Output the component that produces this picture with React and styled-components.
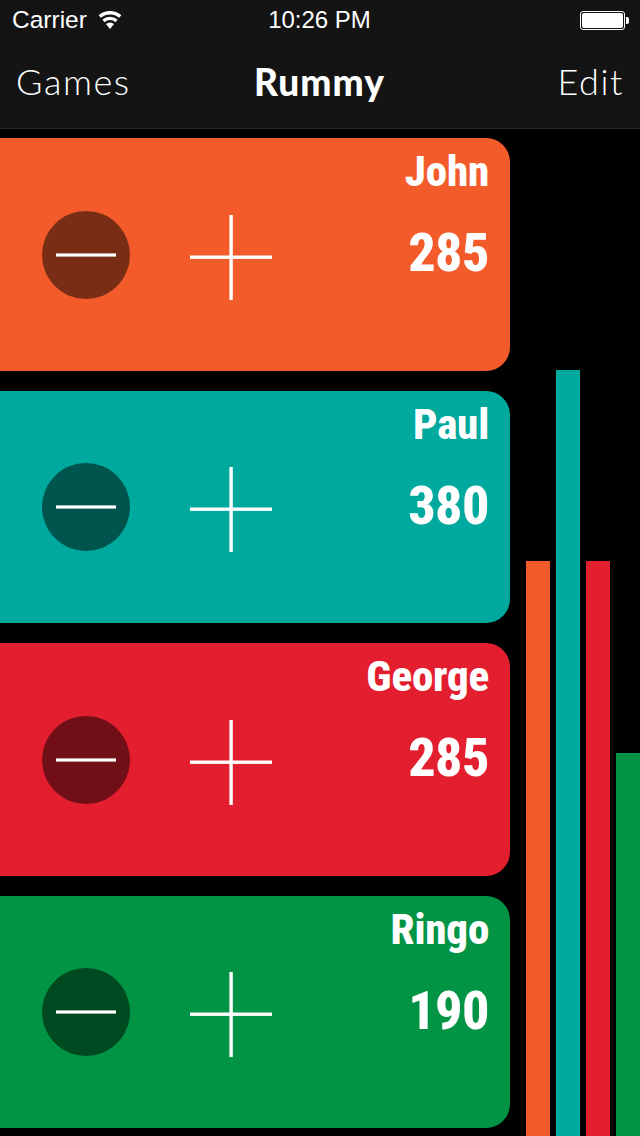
import React from "react";
import styled, { createGlobalStyle } from "styled-components";

const GlobalStyle = createGlobalStyle`
  html, body {
    margin: 0;
    padding: 0;
    background: #000;
    color: white;
  }
`

const players = [
  { name: "John", score: 285, color: "#f35b2a", bar: 575 },
  { name: "Paul", score: 380, color: "#00a99d", bar: 766 },
  { name: "George", score: 285, color: "#e31e2f", bar: 575 },
  { name: "Ringo", score: 190, color: "#009444", bar: 383 },
]

const Page = styled.div`
  width: 640px;
  height: 1136px;
  overflow: hidden;
  background: #000;
  display: flex;
  flex-direction: column;
`

const Header = styled.header`
  height: 128px;
  flex-shrink: 0;
  background: #141414;
  border-bottom: 1px solid #2c2c2c;
`

const StatusBar = styled.div`
  height: 40px;
  display: grid;
  grid-template-columns: 1fr auto 1fr;
  align-items: center;
  padding: 0 12px;
  font-family: "Liberation Sans", sans-serif;
  font-size: 24.5px;
`

const Carrier = styled.div`
  display: flex;
  align-items: center;
  gap: 11px;
`

const Clock = styled.div`
  font-size: 24px;
  margin-right: 1px;
`

const Battery = styled.div`
  justify-self: end;
  width: 41px;
  height: 15px;
  border: 1px solid white;
  border-radius: 3px;
  padding: 1px;
  margin-right: 3px;
  box-sizing: content-box;
  position: relative;

  &::before {
    content: "";
    display: block;
    height: 100%;
    background: white;
    border-radius: 2px;
  }

  &::after {
    content: "";
    position: absolute;
    right: -5px;
    top: 5px;
    width: 3px;
    height: 7px;
    background: white;
    border-radius: 0 2px 2px 0;
  }
`

const NavBar = styled.nav`
  height: 82px;
  display: grid;
  grid-template-columns: 1fr auto 1fr;
  align-items: center;
  padding: 0 17px 0 16px;
  font-family: Lato, sans-serif;
  font-size: 36px;
  font-weight: 300;
  letter-spacing: 1.6px;
`

const NavTitle = styled.h1`
  margin: 0;
  font-size: 37px;
  font-weight: 900;
  letter-spacing: 1px;
`

const NavEdit = styled.div`
  justify-self: end;
  margin-right: -1px;
`

const Body = styled.main`
  display: flex;
  padding-top: 9px;
`

const Cards = styled.div`
  width: 510px;
  flex-shrink: 0;
  display: flex;
  flex-direction: column;
  gap: 20px;
`

const Card = styled.section`
  height: 232.5px;
  flex-shrink: 0;
  box-sizing: border-box;
  background: ${props => props.color};
  border-radius: 0 24px 24px 0;
  display: flex;
  align-items: center;
  padding: 0 21px 0 42px;
`

const MinusButton = styled.button`
  width: 88px;
  height: 88px;
  border: 0;
  padding: 0;
  border-radius: 50%;
  background: rgba(0, 0, 0, 0.5);
  display: flex;
  align-items: center;
  justify-content: center;
  margin-top: 1px;
`

const PlusButton = styled.button`
  width: 82px;
  height: 85px;
  border: 0;
  padding: 0;
  background: none;
  margin: 6px 0 0 60px;
  display: block;
`

const Totals = styled.div`
  margin-left: auto;
  align-self: stretch;
  text-align: right;
  font-family: Roboto, sans-serif;
  font-weight: 800;
  font-stretch: 75%;
`

const Name = styled.div`
  font-size: 43px;
  line-height: 50px;
  margin-top: 8px;
  letter-spacing: -0.2px;
`

const Score = styled.div`
  font-size: 54px;
  line-height: 60px;
  margin-top: 27px;
  letter-spacing: -0.5px;
`

const Chart = styled.div`
  flex: 1;
  height: 998px;
  display: flex;
  align-items: flex-end;
  gap: 6px;
  padding-left: 16px;
`

const Bar = styled.div`
  width: 24px;
  flex-shrink: 0;
  background: ${props => props.color};
`

const WifiIcon = () => (
  <svg width="24" height="18" viewBox="2.6 3 20.8 16.5" fill="white">
    <path d="M13 19.5 9.3 15a5.6 5.6 0 0 1 7.4 0z" />
    <path d="M7.9 13.2 6 10.9a10.8 10.8 0 0 1 14 0l-1.9 2.3a7.8 7.8 0 0 0-10.2 0z" />
    <path d="M4.6 9.2 2.6 6.8a16 16 0 0 1 20.8 0l-2 2.4a13 13 0 0 0-16.8 0z" />
  </svg>
)

const MinusIcon = () => (
  <svg width="60" height="4" viewBox="0 0 60 4">
    <rect y="0.4" width="60" height="3.2" fill="white" />
  </svg>
)

const PlusIcon = () => (
  <svg width="82" height="85" viewBox="0 0 82 85">
    <rect x="0" y="40.5" width="82" height="3.4" fill="white" />
    <rect x="39.4" y="0" width="3.4" height="85" fill="white" />
  </svg>
)

export default function App() {
  return (
    <Page>
      <GlobalStyle />
      <Header>
        <StatusBar>
          <Carrier>Carrier <WifiIcon /></Carrier>
          <Clock>10:26 PM</Clock>
          <Battery />
        </StatusBar>
        <NavBar>
          <div>Games</div>
          <NavTitle>Rummy</NavTitle>
          <NavEdit>Edit</NavEdit>
        </NavBar>
      </Header>
      <Body>
        <Cards>
          {players.map(p => (
            <Card key={p.name} color={p.color}>
              <MinusButton><MinusIcon /></MinusButton>
              <PlusButton><PlusIcon /></PlusButton>
              <Totals>
                <Name>{p.name}</Name>
                <Score>{p.score}</Score>
              </Totals>
            </Card>
          ))}
        </Cards>
        <Chart>
          {players.map(p => (
            <Bar key={p.name} color={p.color} style={{ height: p.bar }} />
          ))}
        </Chart>
      </Body>
    </Page>
  )
}
